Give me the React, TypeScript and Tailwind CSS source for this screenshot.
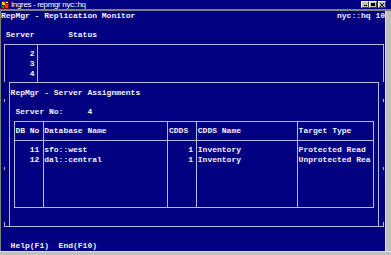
const line = "border-[#b8b8e0]";

function TitleBar() {
  return (
    <div className="h-[9px] bg-[#000080] flex items-center pl-[1px] pr-[5px]">
      <svg width="8" height="8" viewBox="0 0 8 8" className="shrink-0">
        <rect x="0" y="0" width="8" height="8" fill="#800000" />
        <rect x="1" y="1" width="3" height="3" fill="#ffcc00" />
        <rect x="4" y="3" width="3" height="4" fill="#ff3300" />
        <rect x="1" y="5" width="2" height="2" fill="#00a000" />
        <rect x="5" y="1" width="2" height="1" fill="#ffffff" />
      </svg>
      <span className="ml-[2px] text-white text-[8px] leading-[9px] font-['Liberation_Sans',sans-serif] tracking-[-0.35px] whitespace-pre">
        Ingres - repmgr nyc::hq
      </span>
      <div className="ml-auto flex">
        <div className="w-[8px] h-[7px] bg-[#c0c0c0] border-t border-l border-t-white border-l-white border-b border-r border-b-[#404040] border-r-[#404040] flex items-end justify-center">
          <div className="w-[3px] h-[1px] bg-black mb-[1px]" />
        </div>
        <div className="w-[8px] h-[7px] bg-[#c0c0c0] border-t border-l border-t-white border-l-white border-b border-r border-b-[#404040] border-r-[#404040] flex items-center justify-center">
          <div className="w-[4px] h-[3px] border border-black border-t-2" />
        </div>
        <div className="ml-[1px] w-[8px] h-[7px] bg-[#c0c0c0] border-t border-l border-t-white border-l-white border-b border-r border-b-[#404040] border-r-[#404040] flex items-center justify-center">
          <svg width="4" height="4" viewBox="0 0 4 4">
            <path d="M0 0L4 4M4 0L0 4" stroke="black" strokeWidth="1" />
          </svg>
        </div>
      </div>
    </div>
  );
}

function AssignmentsTable() {
  return (
    <div className={`ml-[4px] mt-[4.4px] w-[360px] border ${line}`}>
      <div className={`flex h-[19px] border-b ${line}`}>
        <div className={`w-[29px] border-r ${line} flex items-center pl-[0.4px]`}>DB No</div>
        <div className={`w-[124px] border-r ${line} flex items-center pl-[0.2px]`}>Database Name</div>
        <div className={`w-[29px] border-r ${line} flex items-center pl-[1px]`}>CDDS</div>
        <div className={`w-[101px] border-r ${line} flex items-center pl-[0.8px]`}>CDDS Name</div>
        <div className="flex-1 flex items-center pl-[0.6px]">Target Type</div>
      </div>
      <div className="flex h-[66px]">
        <div className={`w-[29px] border-r ${line} pt-[4.4px] pr-[3.6px] text-right`}>
          <div>11</div>
          <div>12</div>
        </div>
        <div className={`w-[124px] border-r ${line} pt-[4.4px] pl-[0.2px]`}>
          <div>sfo::west</div>
          <div>dal::central</div>
        </div>
        <div className={`w-[29px] border-r ${line} pt-[4.4px] pr-[3px] text-right`}>
          <div>1</div>
          <div>1</div>
        </div>
        <div className={`w-[101px] border-r ${line} pt-[4.4px] pl-[0.8px]`}>
          <div>Inventory</div>
          <div>Inventory</div>
        </div>
        <div className="flex-1 pt-[4.4px] pl-[0.6px] overflow-hidden">
          <div>Protected Read</div>
          <div>Unprotected Rea</div>
        </div>
      </div>
    </div>
  );
}

function Screen() {
  return (
    <div className="w-[384px] h-[240px] bg-[#000080] text-[#f4f4f4] font-['Liberation_Mono',monospace] font-bold text-[8px] leading-[9.6px] whitespace-pre overflow-hidden flex flex-col">
      <div className="flex justify-between h-[9.6px]">
        <span>RepMgr - Replication Monitor</span>
        <span>nyc::hq 10</span>
      </div>
      <div className="h-[9.6px]" />
      <div className="h-[9.6px]">{" Server       Status"}</div>

      <div className={`relative mt-[4.2px] ml-[3px] w-[380px] h-[183px] border ${line}`}>
        <div className={`w-[33px] h-[40px] border-r ${line} pt-[4.4px] pr-[2.4px] text-right`}>
          <div>2</div>
          <div>3</div>
          <div>4</div>
        </div>

        {/* popup window over the server list */}
        <div className="absolute left-[-3px] top-[37px] w-[383px] h-[144px] bg-[#000080]">
          <div className="absolute left-[2px] top-[17px] w-[1px] h-[3px] bg-[#b8b8e0]" />
          <div className="absolute left-[2px] top-[85px] w-[1px] h-[3px] bg-[#b8b8e0]" />
          <div className="absolute left-[2px] top-[140px] w-[1px] h-[4px] bg-[#b8b8e0]" />
          <div className="absolute left-[381px] top-[17px] w-[1px] h-[3px] bg-[#b8b8e0]" />
          <div className="absolute left-[381px] top-[85px] w-[1px] h-[3px] bg-[#b8b8e0]" />
          <div className="absolute left-[381px] top-[140px] w-[1px] h-[4px] bg-[#b8b8e0]" />

          <div className={`relative ml-[7px] w-[370px] h-[145px] border ${line} flex flex-col`}>
            <div className="mt-[4.8px] pl-[0.6px] h-[9.6px]">RepMgr - Server Assignments</div>
            <div className="h-[9.6px]" />
            <div className="pl-[0.6px] h-[9.6px]">{" Server No:     4"}</div>
            <AssignmentsTable />
          </div>
        </div>
      </div>

      <div className="mt-[14.4px] h-[9.6px]">{"  Help(F1)  End(F10)"}</div>
    </div>
  );
}

export default function App() {
  return (
    <div className="w-[391px] h-[255px] flex flex-col bg-[#c0c0c0] overflow-hidden">
      <TitleBar />
      <div className="h-[2px] bg-[#808080]" />
      <div className="flex flex-1">
        <div className="w-[1px] bg-[#808080]" />
        <Screen />
        <div className="w-[6px] border-l border-[#e0e0e0] bg-[#c0c0c0]" />
      </div>
      <div className="h-[4px] border-t border-[#e0e0e0] bg-[#c0c0c0]" />
    </div>
  );
}
